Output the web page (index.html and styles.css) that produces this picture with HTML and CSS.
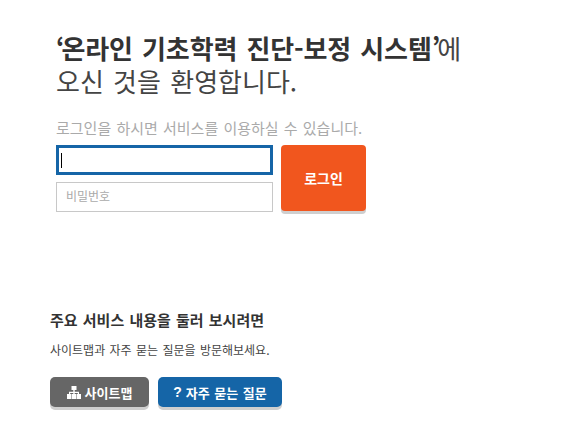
FILE: index.html
```html
<!DOCTYPE html>
<html lang="ko">
<head>
<meta charset="utf-8">
<title>로그인</title>
<link rel="stylesheet" href="styles.css">
</head>
<body>
<main class="page">
  <section class="login">
    <h1 class="title"><strong><span class="quote">‘</span>온라인 기초학력 진단-보정 시스템<span class="quote">’</span></strong>에<br>오신 것을 환영합니다.</h1>
    <p class="hint">로그인을 하시면 서비스를 이용하실 수 있습니다.</p>
    <form class="form">
      <div class="fields">
        <div class="field-wrap">
          <input class="field field-focus" type="text" aria-label="아이디">
          <span class="caret"></span>
        </div>
        <input class="field" type="password" placeholder="비밀번호">
      </div>
      <button class="submit" type="button">로그인</button>
    </form>
  </section>
  <section class="help">
    <h2 class="help-title">주요 서비스 내용을 둘러 보시려면</h2>
    <p class="help-text">사이트맵과 자주 묻는 질문을 방문해보세요.</p>
    <div class="actions">
      <a class="btn btn-gray" href="#">
        <svg class="icon" viewBox="0 0 14 13" width="14" height="13" aria-hidden="true"><path fill="#fff" d="M4.500 0h5v4H7.700v1.700h4.300V8h2v5H9.500V8h1.300V6.900H7.700V8H9v5H5V8h1.300V6.900H3.200V8h1.300v5H0V8h2V5.700h4.300V4H4.500z"/></svg>
        사이트맵
      </a>
      <a class="btn btn-blue" href="#"><span class="q">?</span> 자주 묻는 질문</a>
    </div>
  </section>
</main>
</body>
</html>
```

FILE: styles.css
```css
* { box-sizing: border-box; }
html, body { margin: 0; padding: 0; background: #fff; }
body {
  width: 564px;
  height: 434px;
  overflow: hidden;
  font-family: "Noto Sans CJK KR", "Noto Sans", sans-serif;
  color: #333;
}
.page { padding: 31px 0 0 50px; }
.login { padding-left: 6px; }
.title {
  margin: 0;
  font-size: 26px;
  line-height: 33px;
  font-weight: 400;
  color: #444;
  word-spacing: 2px;
}
.title strong { font-weight: 700; color: #333; letter-spacing: -0.12px; }
.quote { letter-spacing: -3px; }
.hint {
  margin: 21px 0 0;
  font-size: 15px;
  line-height: 20px;
  color: #aaa;
  word-spacing: 1px;
}
.form { display: flex; gap: 8px; margin-top: 7px; }
.fields { display: flex; flex-direction: column; gap: 7px; width: 217px; }
.field-wrap { position: relative; height: 30px; }
.field {
  display: block;
  width: 217px;
  height: 30px;
  padding: 0 9px 3px;
  border: 1px solid #c8c8c8;
  background: #fff;
  font: 12px "Noto Sans CJK KR", sans-serif;
  color: #333;
  outline: none;
  border-radius: 0;
}
.field-focus { border: 3px solid #1565a7; padding: 0 2px; }
.caret {
  position: absolute;
  left: 5px;
  top: 8px;
  width: 1px;
  height: 15px;
  background: #000;
}
.field::placeholder { color: #aaa; opacity: 1; }
.submit {
  width: 85px;
  height: 66px;
  border: 0;
  border-radius: 4px;
  background: #f1561e;
  box-shadow: 0 3px 0 #cfcfcf;
  color: #fff;
  font: 700 14px "Noto Sans CJK KR", sans-serif;
}
.help { margin-top: 98px; }
.help-title {
  margin: 0;
  font-size: 15px;
  line-height: 20px;
  font-weight: 700;
  color: #333;
  word-spacing: 1px;
}
.help-text {
  margin: 11px 0 0;
  font-size: 12px;
  line-height: 18px;
  color: #444;
  word-spacing: 1px;
}
.actions { display: flex; gap: 9px; margin-top: 18px; }
.btn {
  display: inline-flex;
  align-items: center;
  justify-content: center;
  gap: 4px;
  height: 30px;
  border-radius: 5px;
  color: #fff;
  font-size: 13px;
  font-weight: 700;
  text-decoration: none;
  box-shadow: 0 3px 0 #cfcfcf;
  word-spacing: 1px;
}
.btn-gray { width: 99px; background: #666; }
.btn-blue { width: 124px; background: #1565a7; }
.q { font-family: "Liberation Sans", sans-serif; font-weight: 700; font-size: 14px; }
.icon { flex: none; }
```
